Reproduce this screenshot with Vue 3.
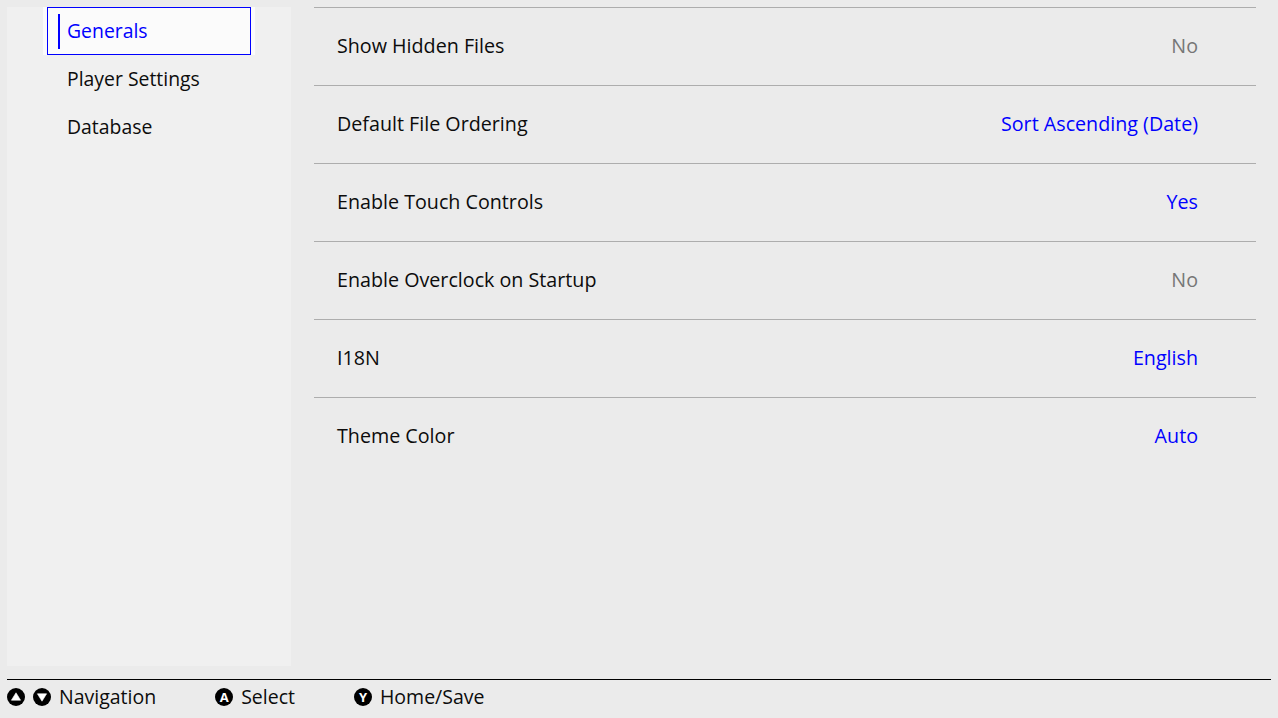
<template>
  <div class="page">
    <div class="main">
      <div class="sidebar">
        <div
          v-for="item in menu"
          :key="item.name"
          class="menu-item"
          :class="{ active: item.active }"
        >
          <span class="menu-label">{{ item.name }}</span>
        </div>
      </div>
      <div class="content">
        <div v-for="row in rows" :key="row.label" class="row">
          <span class="row-label">{{ row.label }}</span>
          <span class="row-value" :class="{ on: row.on }">{{ row.value }}</span>
        </div>
      </div>
    </div>
    <div class="footer">
      <div class="hint nav">
        <svg class="btn" viewBox="0 0 18 18"><circle cx="9" cy="9" r="9" fill="#000" /><path d="M9 4.8 13.6 12.2H4.4Z" fill="#fff" stroke="#fff" stroke-width=".6" stroke-linejoin="round" /></svg>
        <svg class="btn" viewBox="0 0 18 18"><circle cx="9" cy="9" r="9" fill="#000" /><path d="M9 13.2 4.4 5.8h9.2Z" fill="#fff" stroke="#fff" stroke-width=".6" stroke-linejoin="round" /></svg>
        <span>Navigation</span>
      </div>
      <div class="hint">
        <span class="btn letter">A</span>
        <span>Select</span>
      </div>
      <div class="hint">
        <span class="btn letter">Y</span>
        <span>Home/Save</span>
      </div>
    </div>
  </div>
</template>

<script setup>
const menu = [
  { name: 'Generals', active: true },
  { name: 'Player Settings' },
  { name: 'Database' },
];

const rows = [
  { label: 'Show Hidden Files', value: 'No', on: false },
  { label: 'Default File Ordering', value: 'Sort Ascending (Date)', on: true },
  { label: 'Enable Touch Controls', value: 'Yes', on: true },
  { label: 'Enable Overclock on Startup', value: 'No', on: false },
  { label: 'I18N', value: 'English', on: true },
  { label: 'Theme Color', value: 'Auto', on: true },
];
</script>

<style scoped>
.page {
  width: 1278px;
  height: 718px;
  background: #ebebeb;
  display: flex;
  flex-direction: column;
  font-family: "Open Sans", "Noto Sans", sans-serif;
  font-size: 19.7px;
  color: #0c0c0c;
  overflow: hidden;
}

.main {
  flex: 1;
  display: flex;
  padding: 7px 22px 0 7px;
  min-height: 0;
}

.sidebar {
  width: 284px;
  height: 659px;
  background: #f0f0f0;
  padding: 0 36px;
  box-sizing: border-box;
  flex-shrink: 0;
  font-size: 19.4px;
}

.menu-item {
  height: 48px;
  display: flex;
  align-items: center;
  padding: 0 0 2px 24px;
  box-sizing: border-box;
}

.menu-item.active {
  background: #fbfbfb;
  color: #0000ff;
  position: relative;
}

/* selection frame sits 4px inside the highlight */
.menu-item.active::after {
  content: "";
  position: absolute;
  top: 0;
  bottom: 0;
  left: 4px;
  right: 4px;
  border: 1px solid #0000ff;
}

.menu-item.active::before {
  content: "";
  position: absolute;
  left: 15px;
  top: 7px;
  bottom: 6px;
  width: 2px;
  background: #0000ff;
}

.content {
  flex: 1;
  margin-left: 23px;
}

.row {
  height: 78px;
  border-top: 1px solid #adadad;
  box-sizing: border-box;
  display: flex;
  justify-content: space-between;
  align-items: center;
  padding: 0 58px 2px 23px;
}

.row-value {
  color: #767676;
}

.row-value.on {
  color: #0000ff;
}

.footer {
  margin: 0 7px;
  height: 39px;
  border-top: 1px solid #000;
  padding-bottom: 4px;
  display: flex;
  align-items: center;
  box-sizing: border-box;
  font-size: 19.5px;
}

.hint {
  display: flex;
  align-items: center;
  gap: 8px;
  margin-right: 59px;
}

.hint span:last-child {
  margin-top: -1px;
}

.btn {
  width: 18px;
  height: 18px;
  flex-shrink: 0;
}

.letter {
  border-radius: 50%;
  background: #000;
  color: #fff;
  font-size: 13px;
  font-weight: 700;
  line-height: 18px;
  text-align: center;
}
</style>

<style>
html,
body {
  margin: 0;
  background: #ebebeb;
}
</style>
